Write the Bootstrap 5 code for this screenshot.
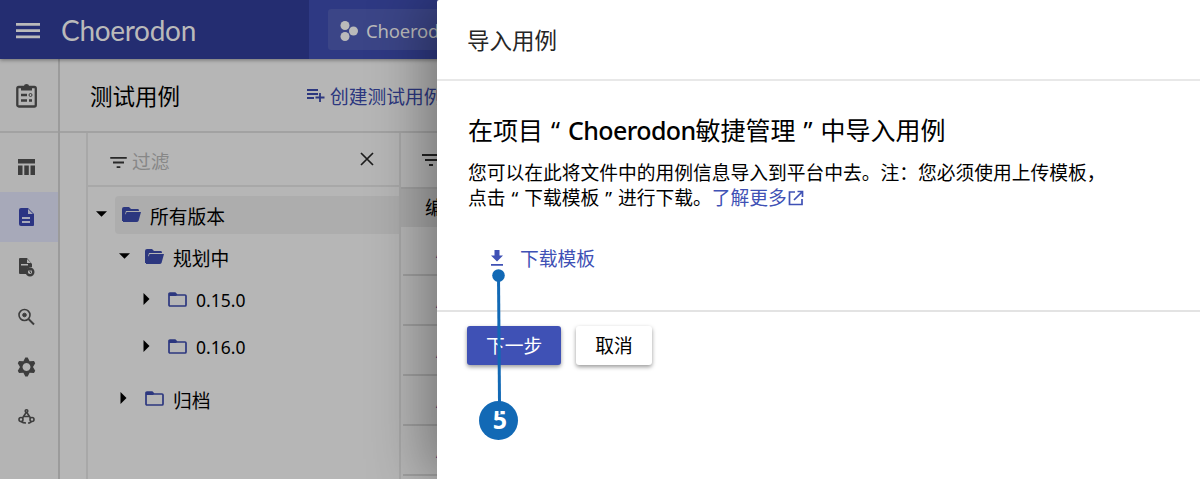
<!DOCTYPE html>
<html lang="zh-CN">
<head>
<meta charset="utf-8">
<meta name="viewport" content="width=device-width, initial-scale=1">
<title>Choerodon</title>
<link href="https://cdn.jsdelivr.net/npm/bootstrap@5.3.0/dist/css/bootstrap.min.css" rel="stylesheet">
<style>
:root{--ink:#3f51b5;--dim:#2c377f;--rule:#a2a2a2}
body{width:1200px;height:479px;overflow:hidden;font-family:"Noto Sans CJK SC",sans-serif;font-size:18.75px;line-height:25px;color:#000}
svg{display:block;flex:none}
.latin{font-family:"Noto Sans","Noto Sans CJK SC",sans-serif}
.shell{height:479px;background:#b6b6b6}
.topbar{height:59px;background:#2e3983;color:#bababa;box-shadow:0 1px 4px #0006;z-index:1}
.brand-area{width:309px;height:59px;background:#242d71;padding-left:16px}
.logo-word{font-family:Lato,sans-serif;font-size:28px;line-height:40px;letter-spacing:-.3px;margin-left:21px}
.project{width:180px;height:41px;margin:0 0 0 19px;padding-left:12px;background:#3b4587;border-radius:3px;color:#bababa}
.project .latin{margin-left:8px;font-size:18.5px;letter-spacing:-.2px}
.rail{width:60px;border-right:2px solid #9b9b9b;color:#3d3d3d;background:#b4b4b4}
.rail-head{height:74px;border-bottom:2px solid var(--rule);padding-left:16px;padding-top:2px}
.rail-item{height:50px;padding-left:16px;padding-bottom:1px}
.rail-item.active{background:#a7a9b9;color:#2b3483;padding-bottom:0}
.page-head{height:74px;border-bottom:2px solid var(--rule);padding-left:30px;padding-top:1px}
.page-title{font-size:22.5px;width:215px}
.create{color:var(--dim);white-space:nowrap}
.tree{width:315px;margin-left:26px;border:solid #a8a8a8;border-width:0 2px}
.filter{height:54px;border-bottom:2px solid #a8a8a8;padding-left:22px;padding-right:25px}
.filter-text{color:#878787;margin-left:5px}
.node{height:38px}
.caret-cell{width:12px;margin-right:9px;padding-bottom:3px}
.label-box{height:38px;padding-left:7px;border-radius:4px 0 0 4px}
.label-box.selected{background:#adadad}
.label-box svg{margin-right:8px;color:var(--dim)}
.grid-head{height:56px;border-bottom:2px solid #a1a1a1;padding-left:21px;color:#222}
.grid-title{height:38px;background:#a9a9a9;padding-left:24px;padding-bottom:3px}
.grid-row{height:50px;border-bottom:2px solid #9f9f9f;margin-left:2px;padding-left:33px;color:var(--dim)}
.grid-title + .grid-row{height:49px}
.drawer{left:437px;top:0;width:763px;height:479px;background:#fff;box-shadow:-8px 0 60px #0006;z-index:5;border-radius:2px 0 0 0}
.drawer-head{height:81px;border-bottom:2px solid #e8e8e8;padding-left:30px;font-size:22.5px;color:#262626}
.drawer-body{height:231px;border-bottom:2px solid #e3e3e3;padding:30px 0 0 31px}
.import-title{font-size:25px;line-height:36px;font-weight:400;margin:0 0 11px}
.import-title .latin{font-weight:500;letter-spacing:-.6px}
.quote{display:inline-block;width:1em;line-height:1;text-align:center;font-family:"Noto Sans",sans-serif}
.link-ink{color:var(--ink)}
.download{margin:36px 0 0 21px}
.download svg{margin-right:15px}
.actions{padding:14px 0 0 30px;gap:15px}
.act{font-size:18.75px;line-height:24px;height:39px;padding:0 19px 2px;border:0;border-radius:3px;box-shadow:0 2px 4px #0006}
.act.main{background:var(--ink);color:#fff}
.act.plain{background:#fff;color:#000}
.callout-mark{left:479px;top:268px;z-index:8}
</style>
</head>
<body class="position-relative">
<svg width="0" height="0" class="position-absolute">
<symbol id="down" viewBox="0 0 12 6"><path d="M0 0h12L6 6z"/></symbol>
<symbol id="right" viewBox="0 0 6 12"><path d="M0 0v12l6-6z"/></symbol>
<symbol id="open" viewBox="0 0 20 16"><path d="M0 14V2Q0 0 2 0h5l2 2h7q1 0 1 2H4L2 11V14zM4.500 5H19l-2.500 9q-.500 1-2 1H2z" fill="currentColor"/><path d="M1 9V15h2L5 6z" fill="currentColor"/></symbol>
<symbol id="closed" viewBox="0 0 20 16"><path d="M2 1h5l2 2h8q1 0 1 1v9q0 1-1 1H2q-1 0-1-1V2q0-1 1-1z" fill="none" stroke="currentColor" stroke-width="1.700"/><path d="M1 1h6l2 3H1z" fill="currentColor"/></symbol>
<symbol id="sieve" viewBox="0 0 18 12"><path d="M0 0h18v2H0zM3 5h12v2H3zM7 10h4v2H7z" fill="currentColor"/></symbol>
</svg>

<div class="shell d-flex flex-column">
  <header class="topbar d-flex align-items-center position-relative">
    <div class="brand-area d-flex align-items-center">
      <svg width="24" height="18" viewBox="0 0 24 18" fill="currentColor" style="margin-top:3px"><path d="M0 1h24v2.800H0zM0 7.200h24V10H0zM0 13.400h24v2.800H0z"/></svg>
      <span class="logo-word">Choerodon</span>
    </div>
    <div class="project d-flex align-items-center">
      <svg width="18" height="20" viewBox="0 0 18 20" fill="currentColor" style="margin-top:3px"><circle cx="5" cy="4.500" r="4.500"/><circle cx="13.500" cy="10" r="4.500"/><circle cx="5" cy="15.500" r="4.500"/></svg>
      <span class="latin" style="margin-top:2px">Choerodon</span>
    </div>
  </header>
  <div class="d-flex flex-grow-1">
    <nav class="rail flex-shrink-0">
      <div class="rail-head d-flex align-items-center">
        <svg width="22" height="26" viewBox="0 0 22 26" fill="none" stroke="currentColor"><rect x="1.300" y="4" width="18.500" height="19.500" rx="1.500" stroke-width="2.300"/><path d="M5 3h3q0-2 2.500-2T13 3h3v4.500H5z" fill="currentColor" stroke="none"/><path d="M5 12h6M5 17.500h6M13 17.500h3" stroke-width="2.400"/><circle cx="14.500" cy="12" r="1.500"/></svg>
      </div>
      <div style="height:9px"></div>
      <div class="rail-item d-flex align-items-center"><svg width="21" height="20" viewBox="0 0 21 20" fill="currentColor"><path d="M2 2h17v4.500H2zM2 8.500h4.500V18H2zM8.300 8.500h4.500V18H8.300zM14.500 8.500H19V18h-4.500z"/></svg></div>
      <div class="rail-item active d-flex align-items-center"><svg width="21" height="20" viewBox="0 0 21 20"><path d="M5 1h7l6 6v11q0 1-1 1H5q-2 0-2-2V3q0-2 2-2z" fill="currentColor"/><path d="M12 2v5h5zM6 10h8v2H6zm0 4h8v2H6z" fill="#a7a9b9"/></svg></div>
      <div class="rail-item d-flex align-items-center"><svg width="21" height="20" viewBox="0 0 21 20"><path d="M4 1h7l5 6v3q-6 0-6 7H4q-1 0-1-1V2q0-1 1-1z" fill="currentColor"/><path d="M11 2v4h4zM5 7h7v1.500H5z" fill="#b4b4b4"/><circle cx="14" cy="15" r="3.300" fill="none" stroke="currentColor" stroke-width="2.400"/><path d="M14 13v2l1 1" stroke="currentColor" fill="none"/></svg></div>
      <div class="rail-item d-flex align-items-center"><svg width="21" height="20" viewBox="0 0 21 20" fill="none" stroke="currentColor"><circle cx="8.500" cy="8" r="5.500" stroke-width="1.600"/><circle cx="8.500" cy="8" r="1.800" fill="currentColor"/><path d="M12.500 12l5.500 5.500" stroke-width="2"/></svg></div>
      <div class="rail-item d-flex align-items-center"><svg width="21" height="20" viewBox="0 0 21 20" fill="currentColor" fill-rule="evenodd"><path d="M9.300 .5h2.400L13.600 4.300 18 4.100 19.200 6.200 17 10 19.200 13.800 18 15.900 13.600 15.700 11.700 19.500H9.300L7.400 15.700 3 15.900 1.800 13.800 4 10 1.800 6.200 3 4.100 7.400 4.300zM10.500 6a4 4 0 1 0 .01 0z"/></svg></div>
      <div class="rail-item d-flex align-items-center"><svg width="21" height="20" viewBox="0 0 21 20" fill="none" stroke="currentColor" stroke-width="1.600"><path d="M10.500 5L6.500 11M10.500 5L14.500 11M7 9.500h7"/><circle cx="10.500" cy="4" r="1.300"/><circle cx="5" cy="12.500" r="2"/><circle cx="16" cy="12.500" r="2"/><path d="M5 14.500q2 1.500 5 1.500M12 16h1.500l2-1.500"/></svg></div>
    </nav>
    <main class="flex-grow-1">
      <div class="page-head d-flex align-items-center">
        <span class="page-title">测试用例</span>
        <span class="create d-flex align-items-center"><svg class="me-1" width="21" height="16" viewBox="0 0 21 16" stroke="currentColor" stroke-width="1.800"><path d="M2 2h11M2 6h11M2 10h7M15 5v9M10.500 9.500h9"/></svg>创建测试用例</span>
      </div>
      <div class="d-flex" style="height:346px">
        <section class="tree flex-shrink-0">
          <div class="filter d-flex align-items-center">
            <svg width="17" height="11" style="margin-top:6px;color:#292929"><use href="#sieve"/></svg>
            <span class="filter-text" style="margin-top:3px">过滤</span>
            <svg class="ms-auto" width="14" height="14" viewBox="0 0 14 14" stroke="#1d1d1d" stroke-width="1.700"><path d="M1 1l12 12M13 1L1 13"/></svg>
          </div>
          <div class="node d-flex align-items-center" style="margin:9px 0 0 7px"><span class="caret-cell d-flex justify-content-center"><svg width="11" height="6"><use href="#down"/></svg></span><span class="label-box selected flex-grow-1 d-flex align-items-center" style="margin-left:-1px"><svg width="20" height="16"><use href="#open"/></svg>所有版本</span></div>
          <div class="node d-flex align-items-center" style="margin:4px 0 0 30px"><span class="caret-cell d-flex justify-content-center"><svg width="11" height="6"><use href="#down"/></svg></span><span class="label-box d-flex align-items-center" style="margin-left:-1px"><svg width="20" height="16"><use href="#open"/></svg>规划中</span></div>
          <div class="node d-flex align-items-center" style="margin:5px 0 0 52px"><span class="caret-cell d-flex justify-content-center"><svg width="7" height="12"><use href="#right"/></svg></span><span class="label-box d-flex align-items-center"><svg width="20" height="16"><use href="#closed"/></svg><span class="latin" style="font-size:17.5px">0.15.0</span></span></div>
          <div class="node d-flex align-items-center" style="margin:9px 0 0 52px"><span class="caret-cell d-flex justify-content-center"><svg width="7" height="12"><use href="#right"/></svg></span><span class="label-box d-flex align-items-center"><svg width="20" height="16"><use href="#closed"/></svg><span class="latin" style="font-size:17.5px">0.16.0</span></span></div>
          <div class="node d-flex align-items-center" style="margin:14px 0 0 29px"><span class="caret-cell d-flex justify-content-center"><svg width="7" height="12"><use href="#right"/></svg></span><span class="label-box d-flex align-items-center"><svg width="20" height="16"><use href="#closed"/></svg>归档</span></div>
        </section>
        <section class="flex-grow-1">
          <div class="grid-head d-flex align-items-center"><svg width="18" height="12"><use href="#sieve"/></svg></div>
          <div class="grid-title d-flex align-items-center">编号</div>
          <div class="grid-row d-flex align-items-center latin">A</div>
          <div class="grid-row d-flex align-items-center latin">A</div>
          <div class="grid-row d-flex align-items-center latin">A</div>
          <div class="grid-row d-flex align-items-center latin">A</div>
          <div class="grid-row d-flex align-items-center latin">A</div>
        </section>
      </div>
    </main>
  </div>
</div>

<aside class="drawer position-absolute">
  <div class="drawer-head d-flex align-items-center">导入用例</div>
  <div class="drawer-body">
    <h1 class="import-title">在项目<span class="quote">“</span><span class="latin">Choerodon</span>敏捷管理<span class="quote">”</span>中导入用例</h1>
    <div class="text-nowrap">您可以在此将文件中的用例信息导入到平台中去。注：您必须使用上传模板，</div>
    <div class="d-flex align-items-center"><span>点击<span class="quote">“</span>下载模板<span class="quote">”</span>进行下载。</span><a class="link-ink text-decoration-none d-flex align-items-center" href="#">了解更多<svg width="16" height="16" viewBox="0 0 16 16" fill="none" stroke="currentColor" stroke-width="1.700" style="margin:3px 0 0 1px"><path d="M7 2H1.500v12.500H14V9M9.500 1.500h5V7M14.500 1.500L6 10"/></svg></a></div>
    <div class="download link-ink d-flex align-items-center"><svg width="16" height="18" viewBox="0 0 16 18" fill="currentColor"><path d="M5.500 1h5v5.500H14L8 12.500 2 6.500h3.500zM2 15h12v1.800H2z"/></svg>下载模板</div>
  </div>
  <div class="actions d-flex">
    <button class="btn act main">下一步</button>
    <button class="btn act plain">取消</button>
  </div>
</aside>

<svg class="callout-mark position-absolute" width="40" height="173" viewBox="0 0 40 173"><circle cx="19.500" cy="7.500" r="6.300" fill="#1269b5"/><path d="M19.500 7L20.500 135" stroke="#1269b5" stroke-width="3"/><circle cx="19.500" cy="152.500" r="19.500" fill="#1269b5"/><text x="21" y="161" text-anchor="middle" font-family="Noto Sans" font-size="25" font-weight="700" fill="#fff">5</text><path d="M20.500 133V146" stroke="#1269b5" stroke-width="2"/></svg>
<script src="https://cdn.jsdelivr.net/npm/bootstrap@5.3.0/dist/js/bootstrap.bundle.min.js"></script>
</body>
</html>
